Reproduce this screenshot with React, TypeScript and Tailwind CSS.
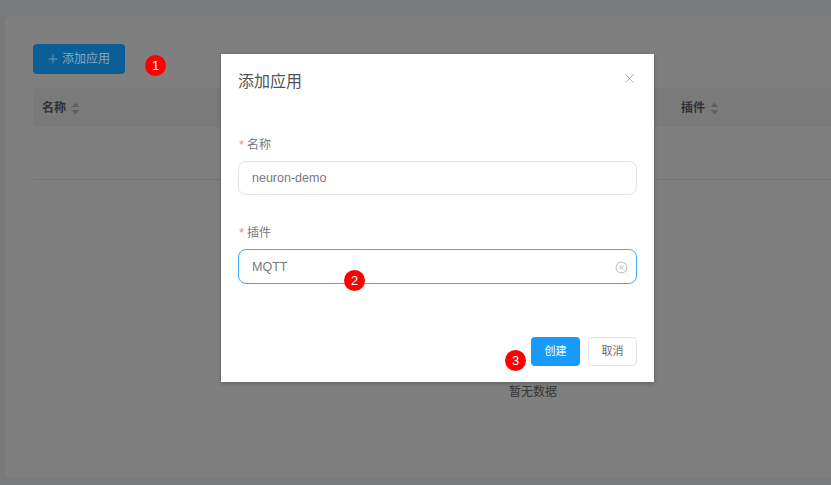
import { Plus, X } from "lucide-react";

const fontStack = "font-['Liberation_Sans','Noto_Sans_CJK_SC',sans-serif]";

const SortIcon = () => (
  <svg width="9" height="13" viewBox="0 0 9 13" className="shrink-0">
    <path d="M4.5 0.5 L8.5 5 H0.5 Z M0.5 8 H8.5 L4.5 12.5 Z" fill="#bfbfbf" />
  </svg>
);

const ClearIcon = () => (
  <svg width="13" height="13" viewBox="0 0 13 13" fill="none" stroke="#c4c6cc" className="shrink-0">
    <circle cx="6.5" cy="6.5" r="5.4" strokeWidth="1.2" />
    <path d="M4.6 4.6 L8.4 8.4 M8.4 4.6 L4.6 8.4" strokeWidth="1.1" />
  </svg>
);

const Badge = ({ label, className }: { label: string; className: string }) => (
  <div
    className={`absolute z-20 flex h-[21px] w-[21px] items-center justify-center rounded-full bg-[#fe0000] text-[13px] text-white ${className}`}
  >
    {label}
  </div>
);

const Field = ({ label, children }: { label: string; children: React.ReactNode }) => (
  <div className="flex flex-col">
    <div className="flex h-[17px] items-center pt-[2px] text-xs text-[#777a80]">
      <span className="mr-[3px] ml-px text-[13px] text-[#f78989]">*</span>
      {label}
    </div>
    {children}
  </div>
);

const App = () => {
  return (
    <div className={`relative h-[485px] w-[831px] overflow-hidden bg-[#f3f5f7] pt-[16px] pl-[5px] ${fontStack}`}>
      <div className="h-[462px] w-[1100px] rounded-md bg-white pt-[28px] pl-[28px]">
        {/* sits above the overlay, its dimmed blue can't be reached through black/50 */}
        <button className="relative z-20 flex h-[30px] w-[92px] items-center gap-[2px] rounded bg-[#0c5e96] pl-[13px] text-xs text-[#86a9c2]">
          <Plus size={14} strokeWidth={1.3} />
          添加应用
        </button>
        <div className="mt-[14px] w-[1000px]">
          <div className="flex h-[39px] items-center rounded bg-[#f4f5f7] pt-px pl-[9px] text-xs font-bold text-[#60646c]">
            <div className="flex w-[639px] items-center gap-[5px]">
              名称
              <SortIcon />
            </div>
            <div className="flex items-center gap-[5px]">
              插件
              <SortIcon />
            </div>
          </div>
          <div className="h-[53px] border-b border-[#e8e9ec]" />
          <div className="pt-[204px] text-center text-xs text-[#6d6d6d]">暂无数据</div>
        </div>
      </div>

      <div className="absolute inset-0 z-10 bg-black/50">
        <div className="ml-[221px] mt-[54px] flex h-[328px] w-[433px] flex-col bg-white px-[17px] shadow-[0_1px_4px_rgba(0,0,0,0.3)]">
          <div className="flex h-[56px] items-center justify-between">
            <span className="text-base text-[#50545a]">添加应用</span>
            <X size={15} strokeWidth={1.2} className="mb-[8px] text-[#8f9196]" />
          </div>
          <div className="mt-[25px]">
            <Field label="名称">
              <div className="mt-[9px] flex h-[34px] items-center rounded-lg border border-[#e3e4ea] pt-px px-[13px] text-[12.5px] text-[#777a80]">
                neuron-demo
              </div>
            </Field>
          </div>
          <div className="mt-[28px]">
            <Field label="插件">
              <div className="mt-[9px] flex h-[35px] items-center justify-between rounded-lg border border-[#45a7f5] pt-px pr-[8px] pl-[13px] text-[12.5px] text-[#777a80]">
                MQTT
                <ClearIcon />
              </div>
            </Field>
          </div>
          <div className="mt-[53px] flex justify-end gap-[8px]">
            <button className="h-[29px] w-[49px] rounded bg-[#1a9bfc] text-[11px] text-white">创建</button>
            <button className="h-[29px] w-[49px] rounded border border-[#e3e4ea] bg-white text-[11px] text-[#666a70]">
              取消
            </button>
          </div>
        </div>
      </div>

      <Badge label="1" className="left-[145px] top-[55px]" />
      <Badge label="2" className="left-[344px] top-[270px]" />
      <Badge label="3" className="left-[505px] top-[350px]" />
    </div>
  );
};

export default App;
